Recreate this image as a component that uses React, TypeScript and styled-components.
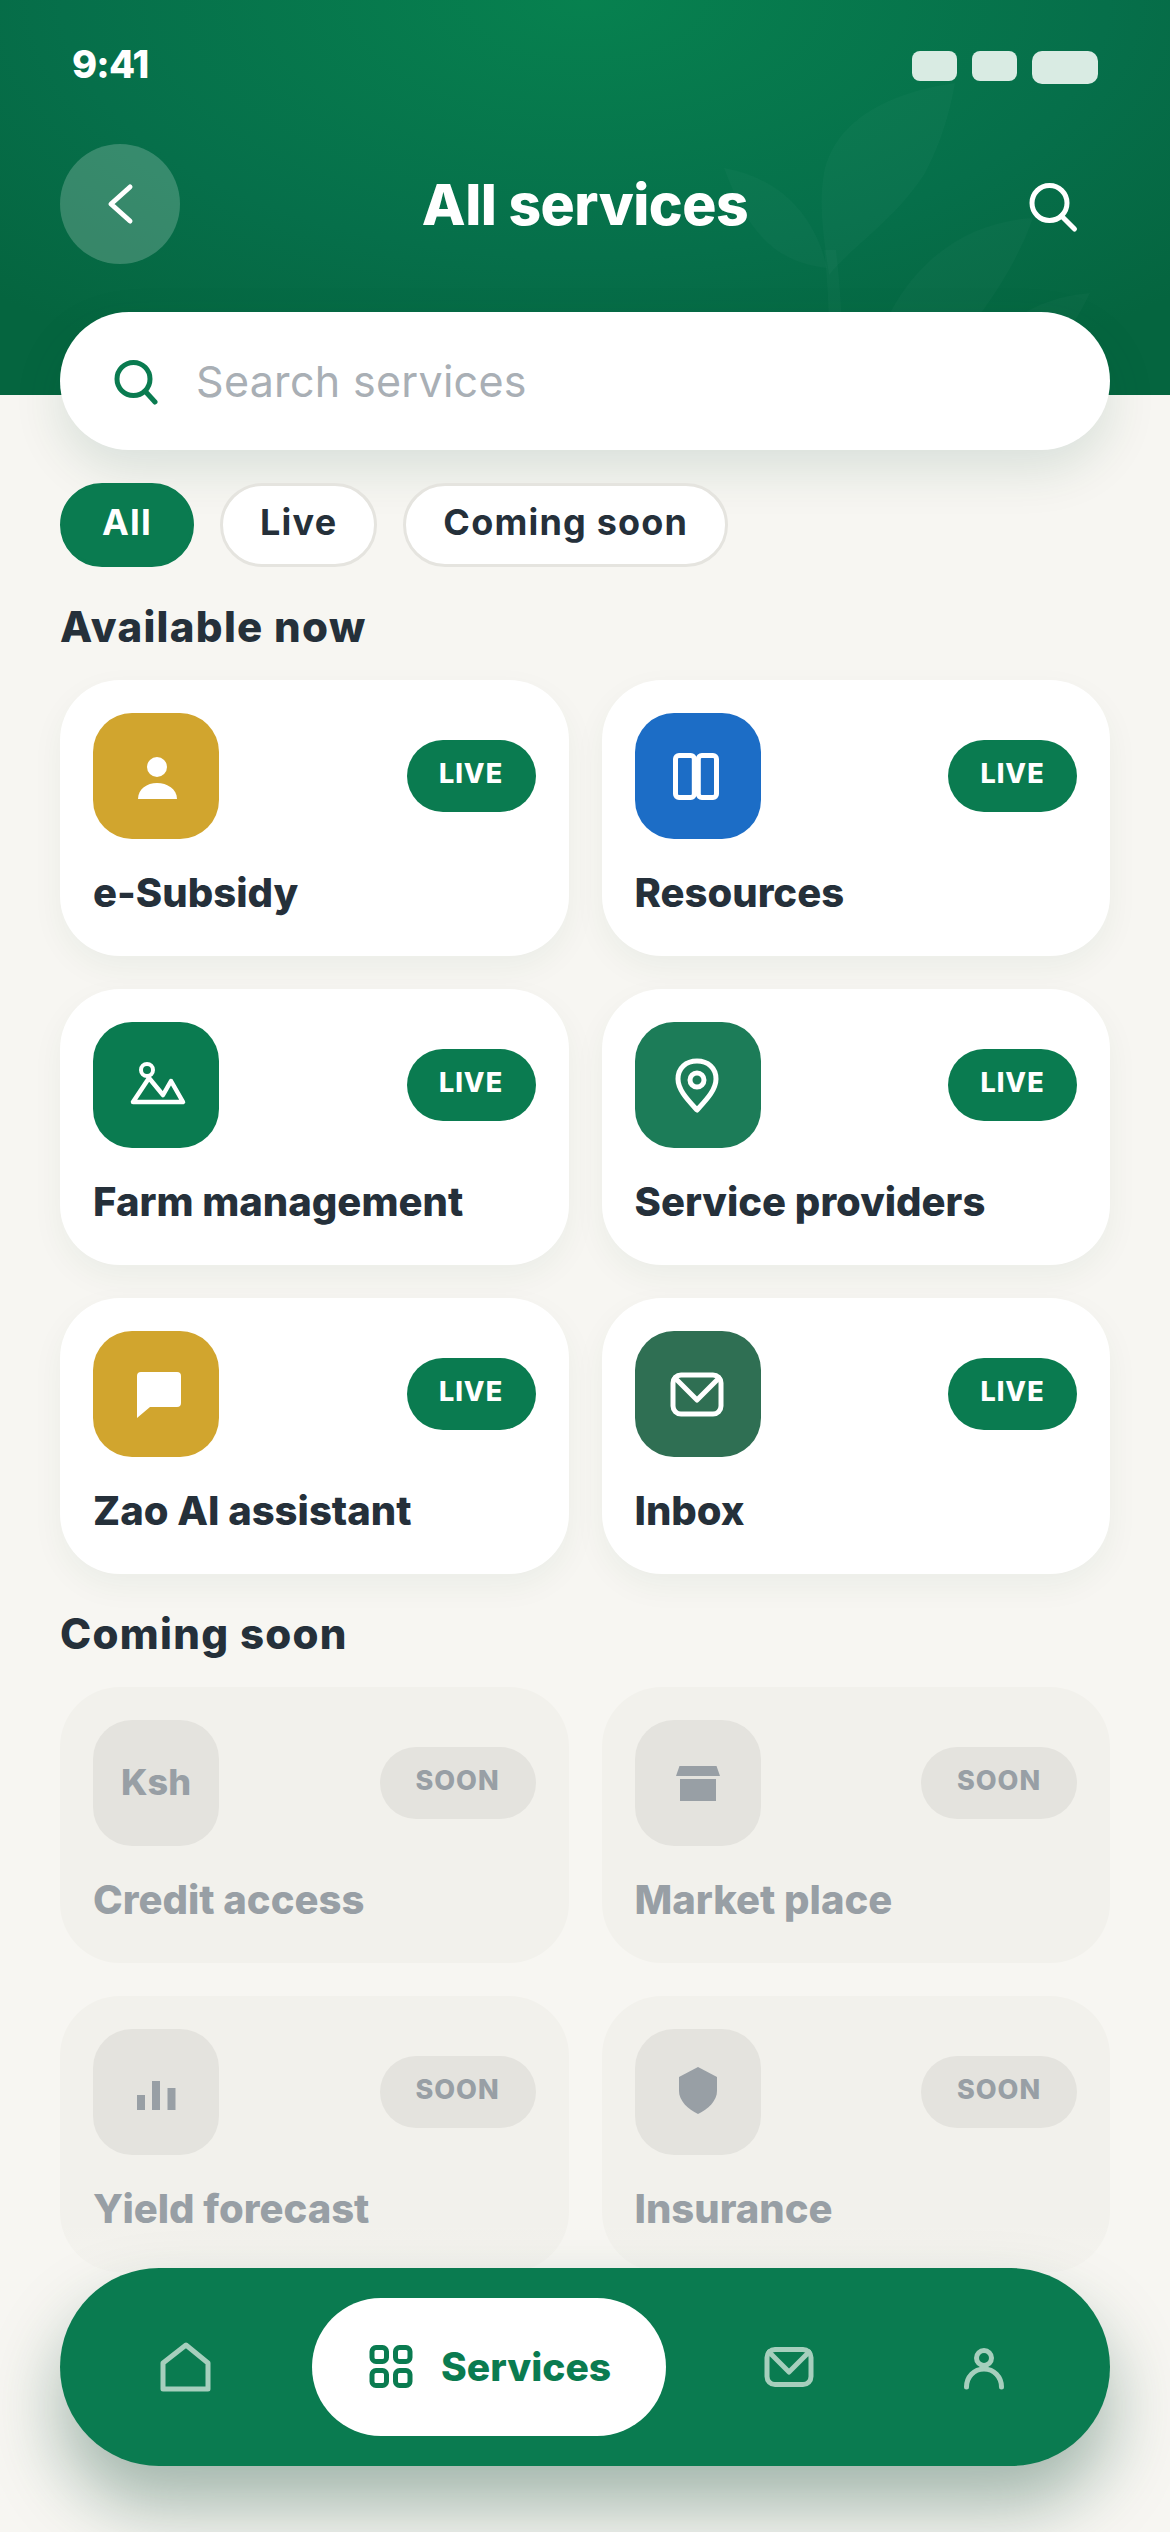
import React from 'react'
import styled, { createGlobalStyle } from 'styled-components'

const GlobalStyle = createGlobalStyle`
  html, body {
    margin: 0;
    padding: 0;
    background: #f7f6f2;
  }
  * {
    box-sizing: border-box;
  }
`

const Page = styled.div`
  position: relative;
  width: 1170px;
  height: 2532px;
  overflow: hidden;
  background: #f7f6f2;
  color: #25303a;
  font-family: Inter, 'Liberation Sans', sans-serif;
`

const Header = styled.header`
  position: relative;
  height: 395px;
  padding: 40px 60px 0;
  color: #fff;
  background: radial-gradient(ellipse 72% 105% at 50% 0, #07814f 0%, #066f4a 62%, #05653f 100%);
`

const Leaves = styled.svg`
  position: absolute;
  inset: 0;
  width: 100%;
  height: 100%;
`

const StatusRow = styled.div`
  position: relative;
  display: flex;
  justify-content: space-between;
  height: 104px;
  padding: 0 12px;
`

const Clock = styled.span`
  font-size: 38px;
  font-weight: 800;
  letter-spacing: -0.8px;
  line-height: 48px;
`

const StatusGroup = styled.div`
  display: flex;
  align-items: flex-start;
  gap: 15px;
  padding-top: 11px;
`

const StatusBlock = styled.i<{ $wide?: boolean }>`
  display: block;
  width: ${({ $wide }) => ($wide ? 66 : 45)}px;
  height: ${({ $wide }) => ($wide ? 33 : 30)}px;
  border-radius: ${({ $wide }) => ($wide ? 10 : 8)}px;
  background: #d9ebe3;
`

const TopBar = styled.div`
  position: relative;
  display: grid;
  grid-template-columns: 120px 1fr 120px;
  align-items: center;
  height: 120px;
`

const BackButton = styled.button`
  width: 120px;
  height: 120px;
  padding: 0;
  border: none;
  border-radius: 50%;
  background: rgba(255, 255, 255, 0.2);
  display: flex;
  align-items: center;
  justify-content: center;
`

const Title = styled.h1`
  margin: 2px 0 0;
  text-align: center;
  font-size: 57px;
  font-weight: 800;
  letter-spacing: -0.5px;
  line-height: 64px;
`

const Content = styled.main`
  position: relative;
  padding: 0 60px;
  margin-top: -83px;
`

const SearchField = styled.div`
  display: flex;
  align-items: center;
  gap: 38px;
  height: 138px;
  padding-left: 54px;
  border-radius: 69px;
  background: #fff;
  box-shadow: 0 20px 50px rgba(12, 70, 46, 0.12);
  font-size: 43px;
  letter-spacing: 0.3px;
  color: #a9afb5;
`

const Chips = styled.div`
  display: flex;
  gap: 26px;
  margin-top: 33px;
`

const Chip = styled.span<{ $active?: boolean }>`
  display: flex;
  align-items: center;
  height: 84px;
  padding: 0 ${({ $active }) => ($active ? 39 : 37)}px 6px;
  border-radius: 42px;
  border: 3px solid ${({ $active }) => ($active ? '#0a7b50' : '#e5e4df')};
  background: ${({ $active }) => ($active ? '#0a7b50' : '#fff')};
  color: ${({ $active }) => ($active ? '#fff' : '#25303a')};
  font-size: 36px;
  font-weight: 700;
  letter-spacing: 1.2px;
`

const SectionTitle = styled.h2`
  margin: 33px 0 26px;
  font-size: 42px;
  font-weight: 800;
  letter-spacing: 1.3px;
  line-height: 54px;
`

const CardGrid = styled.div`
  display: grid;
  grid-template-columns: 1fr 1fr;
  gap: 33px;
`

const Card = styled.article<{ $soon?: boolean }>`
  height: 276px;
  padding: 33px;
  border-radius: 60px;
  background: ${({ $soon }) => ($soon ? '#f2f1ec' : '#fff')};
  box-shadow: ${({ $soon }) => ($soon ? 'none' : '0 12px 32px rgba(12, 70, 46, 0.05)')};
`

const CardTop = styled.div`
  display: flex;
  align-items: center;
  justify-content: space-between;
`

const IconTile = styled.div<{ $color: string }>`
  display: flex;
  align-items: center;
  justify-content: center;
  width: 126px;
  height: 126px;
  padding-bottom: 2px;
  border-radius: 39px;
  background: ${({ $color }) => $color};
  color: #989fa5;
  font-size: 36px;
  font-weight: 800;
`

const Badge = styled.span<{ $soon?: boolean }>`
  display: flex;
  align-items: center;
  justify-content: center;
  width: ${({ $soon }) => ($soon ? 156 : 129)}px;
  height: 72px;
  padding-bottom: 6px;
  border-radius: 36px;
  background: ${({ $soon }) => ($soon ? '#e4e3de' : '#0a7b50')};
  color: ${({ $soon }) => ($soon ? '#989fa5' : '#fff')};
  font-size: 27px;
  font-weight: 800;
  letter-spacing: 1px;
`

const CardTitle = styled.div<{ $soon?: boolean }>`
  margin-top: 27px;
  font-size: 40px;
  font-weight: 800;
  line-height: 54px;
  color: ${({ $soon }) => ($soon ? '#989fa5' : '#25303a')};
`

const Dock = styled.div`
  position: absolute;
  left: 0;
  right: 0;
  bottom: 0;
  padding: 44px 60px 66px;
  background: linear-gradient(to bottom, rgba(247, 246, 242, 0) 0%, #f7f6f2 32%);
`

const Nav = styled.nav`
  display: grid;
  grid-template-columns: 252px 354px 246px 144px;
  align-items: center;
  height: 198px;
  border-radius: 99px;
  background: #0a7b50;
  box-shadow: 0 40px 70px rgba(10, 70, 46, 0.36);
`

const NavSlot = styled.div`
  display: flex;
  justify-content: center;
  color: #a6cfbd;
`

const NavPill = styled.div`
  display: flex;
  align-items: center;
  gap: 14px;
  height: 138px;
  padding: 0 0 2px 43px;
  border-radius: 69px;
  background: #fff;
  color: #0a7b50;
  font-size: 39px;
  font-weight: 800;
`

type GlyphProps = { children: React.ReactNode }

// all tile and nav glyphs are drawn on a 72px square
const Glyph = ({ children }: GlyphProps) => (
  <svg width="72" height="72" viewBox="0 0 72 72" fill="none" stroke="currentColor" strokeWidth="5" strokeLinecap="round" strokeLinejoin="round">
    {children}
  </svg>
)

const White = styled.span`
  display: flex;
  color: #fff;
`

const Grey = styled.span`
  display: flex;
  color: #989fa5;
`

const PersonIcon = () => (
  <White>
    <Glyph>
      <circle cx="37" cy="28" r="10" fill="currentColor" stroke="none" />
      <path d="M18 60C18 50 27 44 37 44S57 50 57 60Z" fill="currentColor" stroke="none" />
    </Glyph>
  </White>
)

const BookIcon = () => (
  <White>
    <Glyph>
      <rect x="13.5" y="16.5" width="18.8" height="42" rx="3.5" />
      <rect x="36.3" y="16.5" width="18.2" height="42" rx="3.5" />
    </Glyph>
  </White>
)

const LandIcon = () => (
  <White>
    <Glyph>
      <circle cx="27" cy="22" r="6" strokeWidth="4" />
      <path d="M13 54L29 30L43 47L51 33L63 54Z" strokeWidth="4.5" />
    </Glyph>
  </White>
)

const PinIcon = () => (
  <White>
    <Glyph>
      <path d="M35 62C26 52 16 42 16 31C16 20 24 13 35 13S54 20 54 31C54 42 44 52 35 62Z" />
      <circle cx="35" cy="32" r="7" />
    </Glyph>
  </White>
)

const ChatIcon = () => (
  <White>
    <Glyph>
      <path d="M21 15H57A4 4 0 0 1 61 19V46A4 4 0 0 1 57 50H30L17 61V19A4 4 0 0 1 21 15Z" fill="currentColor" stroke="none" />
    </Glyph>
  </White>
)

const MailIcon = () => (
  <White>
    <Glyph>
      <rect x="11" y="18" width="48" height="39" rx="8" />
      <path d="M13 21L35 43L57 21" />
    </Glyph>
  </White>
)

const StoreIcon = () => (
  <Grey>
    <Glyph>
      <path d="M17.5 20H54.5L58 30H14Z" fill="currentColor" stroke="none" />
      <rect x="18" y="33" width="36" height="22" fill="currentColor" stroke="none" />
    </Glyph>
  </Grey>
)

const BarsIcon = () => (
  <Grey>
    <Glyph>
      <rect x="17" y="40" width="8" height="15" fill="currentColor" stroke="none" />
      <rect x="32" y="26" width="8" height="29" fill="currentColor" stroke="none" />
      <rect x="47.5" y="33" width="8" height="22" fill="currentColor" stroke="none" />
    </Glyph>
  </Grey>
)

const ShieldIcon = () => (
  <Grey>
    <Glyph>
      <path d="M36 12L55 22V36C55 46 46 54 36 59C26 54 17 46 17 36V22Z" fill="currentColor" stroke="none" />
    </Glyph>
  </Grey>
)

const live = [
  { name: 'e-Subsidy', color: '#d1a52e', icon: <PersonIcon /> },
  { name: 'Resources', color: '#1c6dc6', icon: <BookIcon /> },
  { name: 'Farm management', color: '#0a7b50', icon: <LandIcon /> },
  { name: 'Service providers', color: '#1c7c58', icon: <PinIcon /> },
  { name: 'Zao AI assistant', color: '#d1a52e', icon: <ChatIcon /> },
  { name: 'Inbox', color: '#2f6f53', icon: <MailIcon /> }
]

const soon = [
  { name: 'Credit access', icon: 'Ksh' },
  { name: 'Market place', icon: <StoreIcon /> },
  { name: 'Yield forecast', icon: <BarsIcon /> },
  { name: 'Insurance', icon: <ShieldIcon /> }
]

export default function App() {
  return (
    <Page>
      <GlobalStyle />
      <Header>
        <Leaves viewBox="0 0 1170 395" fill="#fff" fillOpacity="0.022">
          <path d="M955 83C890 92 835 120 824 173C818 205 824 240 829 275C850 248 895 220 925 173C940 145 950 113 955 83Z" />
          <path d="M724 168C745 225 770 262 827 268C815 215 780 178 724 168Z" />
          <path d="M865 395C880 285 950 222 1033 218C1015 270 970 340 905 395Z" />
          <path d="M955 395C985 330 1030 298 1090 293C1070 335 1040 370 1010 395Z" />
          <path d="M824 250C830 300 830 350 826 395H840C844 350 842 300 836 250Z" />
        </Leaves>
        <StatusRow>
          <Clock>9:41</Clock>
          <StatusGroup>
            <StatusBlock />
            <StatusBlock />
            <StatusBlock $wide />
          </StatusGroup>
        </StatusRow>
        <TopBar>
          <BackButton aria-label="Back">
            <svg width="40" height="48" viewBox="0 0 40 48" fill="none" stroke="#fff" strokeWidth="5" strokeLinecap="round" strokeLinejoin="round">
              <path d="M30 7L11 24L30 41" />
            </svg>
          </BackButton>
          <Title>All services</Title>
          <svg width="120" height="120" viewBox="0 0 120 120" fill="none" stroke="#fff" strokeWidth="5" strokeLinecap="round">
            <circle cx="59.5" cy="59" r="17.5" />
            <path d="M71.5 72L84.5 85" />
          </svg>
        </TopBar>
      </Header>
      <Content>
        <SearchField>
          <svg width="44" height="50" viewBox="0 0 44 50" fill="none" stroke="#0a7b50" strokeWidth="5" strokeLinecap="round">
            <circle cx="19.5" cy="23" r="16.5" />
            <path d="M31 35L41 46" />
          </svg>
          Search services
        </SearchField>
        <Chips>
          <Chip $active>All</Chip>
          <Chip>Live</Chip>
          <Chip>Coming soon</Chip>
        </Chips>
        <SectionTitle>Available now</SectionTitle>
        <CardGrid>
          {live.map(item => (
            <Card key={item.name}>
              <CardTop>
                <IconTile $color={item.color}>{item.icon}</IconTile>
                <Badge>LIVE</Badge>
              </CardTop>
              <CardTitle>{item.name}</CardTitle>
            </Card>
          ))}
        </CardGrid>
        <SectionTitle>Coming soon</SectionTitle>
        <CardGrid>
          {soon.map(item => (
            <Card key={item.name} $soon>
              <CardTop>
                <IconTile $color="#e4e3de">{item.icon}</IconTile>
                <Badge $soon>SOON</Badge>
              </CardTop>
              <CardTitle $soon>{item.name}</CardTitle>
            </Card>
          ))}
        </CardGrid>
      </Content>
      <Dock>
        <Nav>
          <NavSlot>
            <Glyph>
              <path d="M36 14L58 32V58H13V32Z" />
            </Glyph>
          </NavSlot>
          <NavPill>
            <Glyph>
              <rect x="17" y="17.5" width="14.5" height="14" rx="4" />
              <rect x="40.5" y="17.5" width="14.5" height="14" rx="4" />
              <rect x="17" y="40.5" width="14.5" height="15" rx="4" />
              <rect x="40.5" y="40.5" width="14.5" height="15" rx="4" />
            </Glyph>
            Services
          </NavPill>
          <NavSlot>
            <Glyph>
              <rect x="14" y="18.5" width="44" height="35" rx="8" />
              <path d="M16 21L36 41L56 21" />
            </Glyph>
          </NavSlot>
          <NavSlot>
            <Glyph>
              <circle cx="36" cy="27" r="7.5" />
              <path d="M18.5 56C18.5 46 26 38 36 38S53.5 46 53.5 56" />
            </Glyph>
          </NavSlot>
        </Nav>
      </Dock>
    </Page>
  )
}
